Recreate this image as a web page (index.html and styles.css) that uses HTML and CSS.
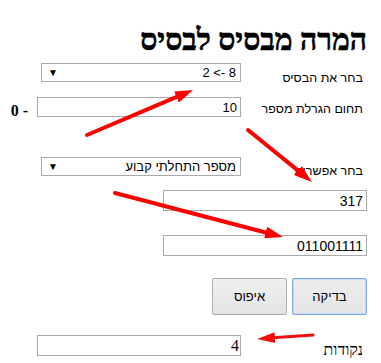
FILE: index.html
```html
<!DOCTYPE html>
<html lang="he" dir="rtl">
<head>
<meta charset="utf-8">
<title>המרה מבסיס לבסיס</title>
<link rel="stylesheet" href="styles.css">
</head>
<body>
<div class="page">
  <h1 class="title">המרה מבסיס לבסיס</h1>

  <div class="row row-base">
    <label class="label lbl-base">בחר את הבסיס</label>
    <div class="select"><span class="sel-text">8 -&gt; 2</span><span class="sel-arrow">▼</span></div>
  </div>

  <div class="row row-range">
    <label class="label lbl-range">תחום הגרלת מספר</label>
    <input class="field field-mid" type="text" value="10">
    <span class="range" dir="ltr">0 -</span>
  </div>

  <div class="row row-option">
    <label class="label lbl-option">בחר אפשרות</label>
    <div class="select"><span class="sel-text">מספר התחלתי קבוע</span><span class="sel-arrow">▼</span></div>
  </div>

  <input class="field wide first" type="text" value="317">
  <input class="field wide second" type="text" value="011001111">

  <div class="buttons">
    <button class="btn btn-check" type="button">בדיקה</button>
    <button class="btn" type="button">איפוס</button>
  </div>

  <div class="row row-points">
    <label class="label lbl-points">נקודות</label>
    <input class="field field-mid serif" type="text" value="4">
  </div>

  <svg class="marks" width="381" height="363" viewBox="0 0 381 363" aria-hidden="true">
    <defs>
      <marker id="head" markerUnits="userSpaceOnUse" markerWidth="18" markerHeight="12" refX="6" refY="6" orient="auto">
        <path d="M0,0 L18,6 L0,12 Z" fill="#ff0000"/>
      </marker>
      <marker id="head-s" markerUnits="userSpaceOnUse" markerWidth="18" markerHeight="11" refX="6" refY="5.5" orient="auto">
        <path d="M0,0 L18,5.5 L0,11 Z" fill="#f01010"/>
      </marker>
    </defs>
    <line x1="87" y1="135" x2="182" y2="94.7" stroke="#ff0000" stroke-width="4" stroke-linecap="round" marker-end="url(#head)"/>
    <line x1="248" y1="130" x2="302.7" y2="174.4" stroke="#ff0000" stroke-width="4" stroke-linecap="round" marker-end="url(#head)"/>
    <line x1="115" y1="193" x2="271.4" y2="234" stroke="#ff0000" stroke-width="4" stroke-linecap="round" marker-end="url(#head)"/>
    <line x1="313" y1="335" x2="269" y2="338.1" stroke="#f01010" stroke-width="3" stroke-linecap="round" marker-end="url(#head-s)"/>
  </svg>
</div>
</body>
</html>
```

FILE: styles.css
```css
html, body {
  margin: 0;
  padding: 0;
  background: #ffffff;
}

body {
  font-family: "Liberation Sans", Arial, sans-serif;
  color: #000000;
}

.page {
  position: relative;
  width: 381px;
  height: 363px;
  box-sizing: border-box;
  padding: 0 14px 0 0;
  direction: rtl;
  overflow: hidden;
}

.title {
  margin: 24px 0 0 0;
  font-family: "Liberation Serif", "Times New Roman", serif;
  font-weight: bold;
  font-size: 30px;
  line-height: 32px;
  -webkit-text-stroke: 0.6px #000000;
}

.row {
  display: flex;
  align-items: flex-start;
}

.label {
  flex: none;
  width: 126px;
  box-sizing: border-box;
  padding-right: 4px;
  font-size: 12.5px;
  line-height: 16px;
}

.row-base { margin-top: 7px; }
.lbl-base { padding-top: 7px; }

.row-range { margin-top: 11px; }
.lbl-range { padding-top: 4px; }

.row-option { margin-top: 36px; }
.lbl-option { padding-top: 6px; }

.row-points { margin-top: 20px; }
.lbl-points {
  padding-top: 6px;
  font-family: "Liberation Serif", "Times New Roman", serif;
  font-size: 16px;
  line-height: 18px;
}

.select {
  flex: none;
  width: 200px;
  height: 19px;
  box-sizing: border-box;
  border: 1px solid #a9a9a9;
  background: #ffffff;
  display: flex;
  align-items: center;
  justify-content: space-between;
  padding: 0 4px 0 6px;
  font-size: 13px;
  line-height: 15px;
}

.sel-arrow {
  font-size: 10px;
  line-height: 12px;
  color: #000000;
}

.field {
  flex: none;
  box-sizing: border-box;
  margin: 0;
  border: 1px solid #a9a9a9;
  padding: 0 3px 0 2px;
  background: #ffffff;
  font-family: "Liberation Sans", Arial, sans-serif;
  font-size: 13px;
  color: #000000;
  outline: none;
  direction: rtl;
  text-align: right;
}

.field-mid {
  width: 204px;
  height: 20px;
}

.row-points .field-mid {
  height: 21px;
}

.serif {
  font-family: "Liberation Serif", "Times New Roman", serif;
  font-size: 16px;
  padding-right: 1px;
}

.range {
  flex: none;
  margin-right: 9px;
  padding-top: 4px;
  font-family: "Liberation Serif", "Times New Roman", serif;
  font-weight: bold;
  font-size: 16px;
  line-height: 20px;
}

.wide {
  display: block;
  width: 204px;
  height: 21px;
  font-size: 14px;
}

.first { margin-top: 11px; }
.second { margin-top: 24px; }

.buttons {
  display: flex;
  gap: 5px;
  margin-top: 22px;
}

.btn {
  width: 75px;
  height: 37px;
  box-sizing: border-box;
  margin: 0;
  border: 1px solid #adadad;
  border-radius: 2px;
  background: linear-gradient(#f0f0f0, #e3e3e3);
  font-family: "Liberation Sans", Arial, sans-serif;
  font-size: 13px;
  color: #000000;
  padding: 0;
}

.btn-check {
  border-color: #7ea6e4;
  box-shadow: inset 0 0 0 1px #c8daf4;
  background: linear-gradient(#ededed, #e4e4e4);
}

.marks {
  position: absolute;
  left: 0;
  top: 0;
  pointer-events: none;
}
```
